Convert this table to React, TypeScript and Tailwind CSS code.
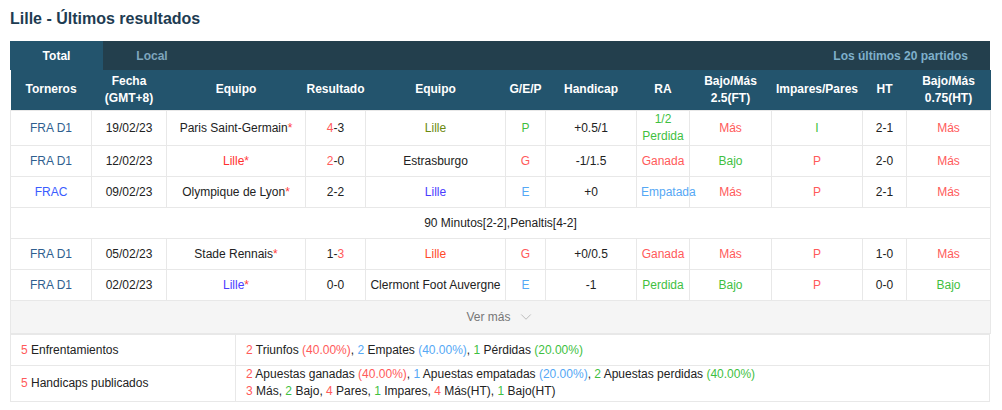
import { ChevronDown } from 'lucide-react'

const RED = 'text-[#ff5a5a]'
const GREEN = 'text-[#3fbf3f]'
const BLUE = 'text-[#55a8f5]'

type Row = {
  liga: string
  ligaCls?: string
  fecha: string
  home: React.ReactNode
  score: React.ReactNode
  away: React.ReactNode
  gep: React.ReactNode
  hcp: string
  ra: React.ReactNode
  ou: React.ReactNode
  ip: React.ReactNode
  ht: string
  ouht: React.ReactNode
  tall?: boolean
}

const star = <span className="text-[#ff4040]">*</span>

const rows: Row[] = [
  {
    liga: 'FRA D1',
    fecha: '19/02/23',
    home: <>Paris Saint-Germain{star}</>,
    score: <><span className={RED}>4</span>-3</>,
    away: <span className="text-[#6b8a10]">Lille</span>,
    gep: <span className={GREEN}>P</span>,
    hcp: '+0.5/1',
    ra: <span className={`${GREEN} leading-[17px] block`}>1/2<br />Perdida</span>,
    ou: <span className={RED}>Más</span>,
    ip: <span className={GREEN}>I</span>,
    ht: '2-1',
    ouht: <span className={RED}>Más</span>,
    tall: true,
  },
  {
    liga: 'FRA D1',
    fecha: '12/02/23',
    home: <><span className="text-[#ff3030]">Lille</span>{star}</>,
    score: <><span className={RED}>2</span>-0</>,
    away: 'Estrasburgo',
    gep: <span className={RED}>G</span>,
    hcp: '-1/1.5',
    ra: <span className={RED}>Ganada</span>,
    ou: <span className={GREEN}>Bajo</span>,
    ip: <span className={RED}>P</span>,
    ht: '2-0',
    ouht: <span className={RED}>Más</span>,
  },
  {
    liga: 'FRAC',
    ligaCls: 'text-[#3a5cff]',
    fecha: '09/02/23',
    home: <>Olympique de Lyon{star}</>,
    score: '2-2',
    away: <span className="text-[#4a3cff]">Lille</span>,
    gep: <span className={BLUE}>E</span>,
    hcp: '+0',
    ra: <span className={BLUE}>Empatada</span>,
    ou: <span className={RED}>Más</span>,
    ip: <span className={RED}>P</span>,
    ht: '2-1',
    ouht: <span className={RED}>Más</span>,
  },
]

const rows2: Row[] = [
  {
    liga: 'FRA D1',
    fecha: '05/02/23',
    home: <>Stade Rennais{star}</>,
    score: <>1-<span className={RED}>3</span></>,
    away: <span className="text-[#ff4a2a]">Lille</span>,
    gep: <span className={RED}>G</span>,
    hcp: '+0/0.5',
    ra: <span className={RED}>Ganada</span>,
    ou: <span className={RED}>Más</span>,
    ip: <span className={RED}>P</span>,
    ht: '1-0',
    ouht: <span className={RED}>Más</span>,
  },
  {
    liga: 'FRA D1',
    fecha: '02/02/23',
    home: <><span className="text-[#4a3cff]">Lille</span>{star}</>,
    score: '0-0',
    away: 'Clermont Foot Auvergne',
    gep: <span className={BLUE}>E</span>,
    hcp: '-1',
    ra: <span className={GREEN}>Perdida</span>,
    ou: <span className={GREEN}>Bajo</span>,
    ip: <span className={RED}>P</span>,
    ht: '0-0',
    ouht: <span className={GREEN}>Bajo</span>,
  },
]

const widths = [81, 75, 139, 60, 140, 40, 91, 53, 82, 91, 44, 84]

function DataRow({ r }: { r: Row }) {
  const td = 'border border-[#e8e8e8] text-center px-1'
  return (
    <tr className={r.tall ? 'h-[35px]' : 'h-[31px]'}>
      <td className={`${td} ${r.ligaCls ?? 'text-[#2f5f8f]'}`}>{r.liga}</td>
      <td className={td}>{r.fecha}</td>
      <td className={td}>{r.home}</td>
      <td className={td}>{r.score}</td>
      <td className={td}>{r.away}</td>
      <td className={td}>{r.gep}</td>
      <td className={td}>{r.hcp}</td>
      <td className={td}>{r.ra}</td>
      <td className={td}>{r.ou}</td>
      <td className={td}>{r.ip}</td>
      <td className={td}>{r.ht}</td>
      <td className={td}>{r.ouht}</td>
    </tr>
  )
}

export default function App() {
  const th = 'font-bold text-white text-center leading-[17px] px-0'
  return (
    <div className="w-[1002px] h-[410px] bg-white font-['Liberation_Sans',Arial,sans-serif] text-[12px] text-[#222]">
      <h1 className="pl-[10px] pt-[7px] h-[41px] text-[16px] font-bold text-[#1e3c52]">
        Lille - Últimos resultados
      </h1>
      <div className="ml-[10px] w-[980px]">
        <div className="flex h-[29px] items-center bg-[#233f4d] text-[12px] font-bold">
          <div className="flex h-full w-[93px] items-center justify-center bg-[#23546d] text-white">Total</div>
          <div className="w-[98px] text-center text-[#7fa6bd]">Local</div>
          <div className="ml-auto pr-[22px] text-[#7fb0cb]">Los últimos 20 partidos</div>
        </div>
        <table className="w-[980px] table-fixed border-collapse">
          <colgroup>
            {widths.map((w, i) => (
              <col key={i} style={{ width: w }} />
            ))}
          </colgroup>
          <thead>
            <tr className="h-[40px] bg-[#23546d]">
              <th className={th}>Torneros</th>
              <th className={th}>Fecha<br />(GMT+8)</th>
              <th className={th}>Equipo</th>
              <th className={th}>Resultado</th>
              <th className={th}>Equipo</th>
              <th className={th}>G/E/P</th>
              <th className={th}>Handicap</th>
              <th className={th}>RA</th>
              <th className={th}>Bajo/Más<br />2.5(FT)</th>
              <th className={th}>Impares/Pares</th>
              <th className={th}>HT</th>
              <th className={th}>Bajo/Más<br />0.75(HT)</th>
            </tr>
          </thead>
          <tbody>
            {rows.map((r, i) => (
              <DataRow key={i} r={r} />
            ))}
            <tr className="h-[31px]">
              <td colSpan={12} className="border border-[#e8e8e8] text-center">
                90 Minutos[2-2],Penaltis[4-2]
              </td>
            </tr>
            {rows2.map((r, i) => (
              <DataRow key={i} r={r} />
            ))}
            <tr className="h-[33px] bg-[#f5f5f5]">
              <td colSpan={12} className="border border-[#e8e8e8] text-center text-[#777]">
                <span className="inline-flex items-center gap-[6px]">
                  Ver más
                  <ChevronDown size={18} strokeWidth={1} className="text-[#aaa]" />
                </span>
              </td>
            </tr>
          </tbody>
        </table>
        <table className="w-[980px] table-fixed border-collapse">
          <colgroup>
            <col style={{ width: 225 }} />
            <col />
          </colgroup>
          <tbody>
            <tr className="h-[31px]">
              <td className="border border-[#e8e8e8] pl-[10px]">
                <span className={RED}>5</span> Enfrentamientos
              </td>
              <td className="border border-[#e8e8e8] pl-[10px]">
                <span className={RED}>2</span> Triunfos <span className={RED}>(40.00%)</span>,{' '}
                <span className={BLUE}>2</span> Empates <span className={BLUE}>(40.00%)</span>,{' '}
                <span className={GREEN}>1</span> Pérdidas <span className={GREEN}>(20.00%)</span>
              </td>
            </tr>
            <tr className="h-[36px]">
              <td className="border border-[#e8e8e8] pl-[10px]">
                <span className={RED}>5</span> Handicaps publicados
              </td>
              <td className="border border-[#e8e8e8] pl-[10px] leading-[17px]">
                <div>
                  <span className={RED}>2</span> Apuestas ganadas <span className={RED}>(40.00%)</span>,{' '}
                  <span className={BLUE}>1</span> Apuestas empatadas <span className={BLUE}>(20.00%)</span>,{' '}
                  <span className={GREEN}>2</span> Apuestas perdidas <span className={GREEN}>(40.00%)</span>
                </div>
                <div>
                  <span className={RED}>3</span> Más, <span className={GREEN}>2</span> Bajo,{' '}
                  <span className={RED}>4</span> Pares, <span className={GREEN}>1</span> Impares,{' '}
                  <span className={RED}>4</span> Más(HT), <span className={GREEN}>1</span> Bajo(HT)
                </div>
              </td>
            </tr>
          </tbody>
        </table>
      </div>
    </div>
  )
}
